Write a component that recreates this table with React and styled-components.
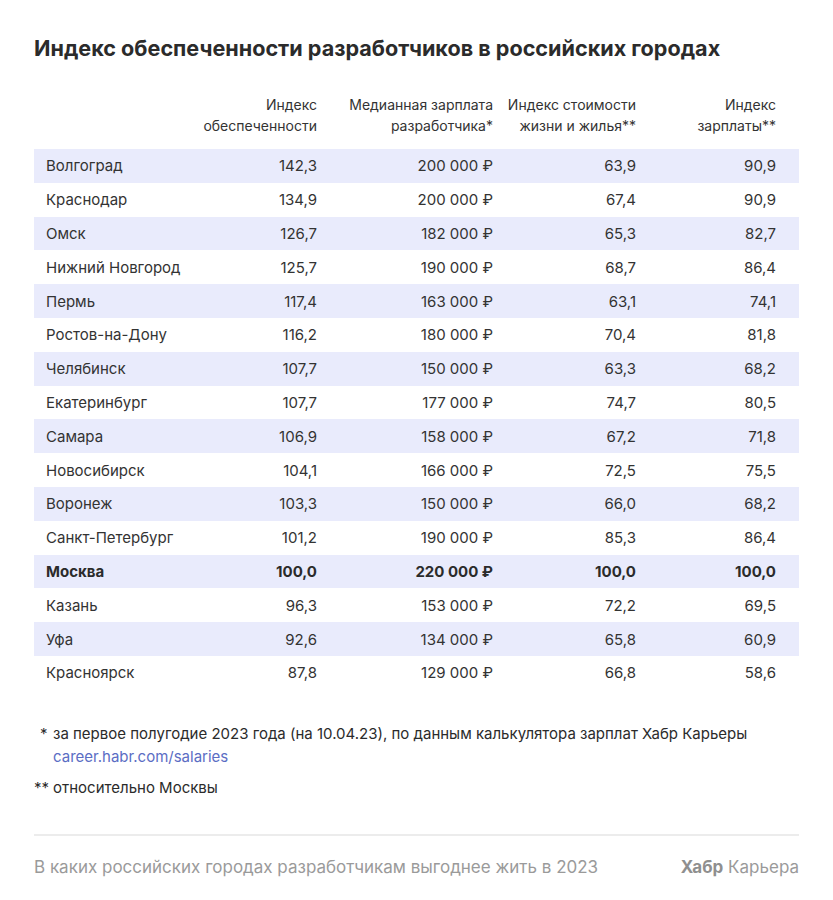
import React from "react";
import styled, { createGlobalStyle } from "styled-components";

const Global = createGlobalStyle`
  html, body { margin: 0; padding: 0; background: #fff; }
  body { font-family: Inter, "Noto Sans", sans-serif; color: #333; }
`;

const Page = styled.div`
  width: 833px;
  height: 900px;
  box-sizing: border-box;
  padding: 34px 34px 0 34px;
  display: flex;
  flex-direction: column;
`;

const Title = styled.h1`
  margin: 0;
  font-size: 21.6px;
  line-height: 28px;
  font-weight: 700;
  color: #2b2b2b;
`;

const COLS = "156px 139px 176px 143px 151px";

const HeadRow = styled.div`
  display: grid;
  grid-template-columns: ${COLS};
  margin-top: 32px;
  padding-bottom: 13px;
`;

const HeadCell = styled.div`
  font-size: 14px;
  line-height: 21px;
  text-align: right;
  color: #333;
  padding-right: ${(p) => (p.$last ? "23px" : "12px")};
`;

const Row = styled.div`
  display: grid;
  grid-template-columns: ${COLS};
  height: 33.8px;
  align-items: center;
  background: ${(p) => (p.$shade ? "#e9ebfc" : "#fff")};
  font-size: 15px;
  font-weight: ${(p) => (p.$bold ? 700 : 400)};
  color: ${(p) => (p.$bold ? "#2b2b2b" : "#333")};
`;

const Cell = styled.div`
  text-align: ${(p) => (p.$left ? "left" : "right")};
  padding-left: ${(p) => (p.$left ? "12px" : "0")};
  padding-right: ${(p) => (p.$left ? "0" : p.$last ? "23px" : "12px")};
  white-space: nowrap;
`;

const Notes = styled.div`
  margin-top: 32px;
  display: flex;
  flex-direction: column;
  gap: 8px;
  font-size: 15px;
  line-height: 23px;
  color: #2b2b2b;
`;

const Note = styled.div`
  display: grid;
  grid-template-columns: 19px 1fr;
`;

const Mark = styled.span`
  padding-left: ${(p) => (p.$indent ? "6px" : "0")};
`;

const Link = styled.a`
  color: #5b6dc4;
  text-decoration: none;
  display: block;
`;

const Divider = styled.hr`
  margin: 35px 0 0 0;
  border: 0;
  border-top: 2px solid #ececec;
`;

const Footer = styled.div`
  display: flex;
  justify-content: space-between;
  align-items: center;
  margin-top: 21px;
  font-size: 17px;
  color: #9a9a9a;
`;

const Brand = styled.span`
  b { font-weight: 700; color: #8f8f8f; }
`;

const data = [
  ["Волгоград", "142,3", "200 000 ₽", "63,9", "90,9"],
  ["Краснодар", "134,9", "200 000 ₽", "67,4", "90,9"],
  ["Омск", "126,7", "182 000 ₽", "65,3", "82,7"],
  ["Нижний Новгород", "125,7", "190 000 ₽", "68,7", "86,4"],
  ["Пермь", "117,4", "163 000 ₽", "63,1", "74,1"],
  ["Ростов-на-Дону", "116,2", "180 000 ₽", "70,4", "81,8"],
  ["Челябинск", "107,7", "150 000 ₽", "63,3", "68,2"],
  ["Екатеринбург", "107,7", "177 000 ₽", "74,7", "80,5"],
  ["Самара", "106,9", "158 000 ₽", "67,2", "71,8"],
  ["Новосибирск", "104,1", "166 000 ₽", "72,5", "75,5"],
  ["Воронеж", "103,3", "150 000 ₽", "66,0", "68,2"],
  ["Санкт-Петербург", "101,2", "190 000 ₽", "85,3", "86,4"],
  ["Москва", "100,0", "220 000 ₽", "100,0", "100,0"],
  ["Казань", "96,3", "153 000 ₽", "72,2", "69,5"],
  ["Уфа", "92,6", "134 000 ₽", "65,8", "60,9"],
  ["Красноярск", "87,8", "129 000 ₽", "66,8", "58,6"],
];

export default function App() {
  return (
    <Page>
      <Global />
      <Title>Индекс обеспеченности разработчиков в российских городах</Title>
      <HeadRow>
        <HeadCell />
        <HeadCell>Индекс<br />обеспеченности</HeadCell>
        <HeadCell>Медианная зарплата<br />разработчика*</HeadCell>
        <HeadCell>Индекс стоимости<br />жизни и жилья**</HeadCell>
        <HeadCell $last>Индекс<br />зарплаты**</HeadCell>
      </HeadRow>
      {data.map((r, i) => (
        <Row key={r[0]} $shade={i % 2 === 0} $bold={r[0] === "Москва"}>
          <Cell $left>{r[0]}</Cell>
          <Cell>{r[1]}</Cell>
          <Cell>{r[2]}</Cell>
          <Cell>{r[3]}</Cell>
          <Cell $last>{r[4]}</Cell>
        </Row>
      ))}
      <Notes>
        <Note>
          <Mark $indent>*</Mark>
          <div>
            за первое полугодие 2023 года (на 10.04.23), по данным калькулятора зарплат Хабр Карьеры
            <Link href="#">career.habr.com/salaries</Link>
          </div>
        </Note>
        <Note>
          <Mark>**</Mark>
          <div>относительно Москвы</div>
        </Note>
      </Notes>
      <Divider />
      <Footer>
        <span>В каких российских городах разработчикам выгоднее жить в 2023</span>
        <Brand><b>Хабр</b> Карьера</Brand>
      </Footer>
    </Page>
  );
}
